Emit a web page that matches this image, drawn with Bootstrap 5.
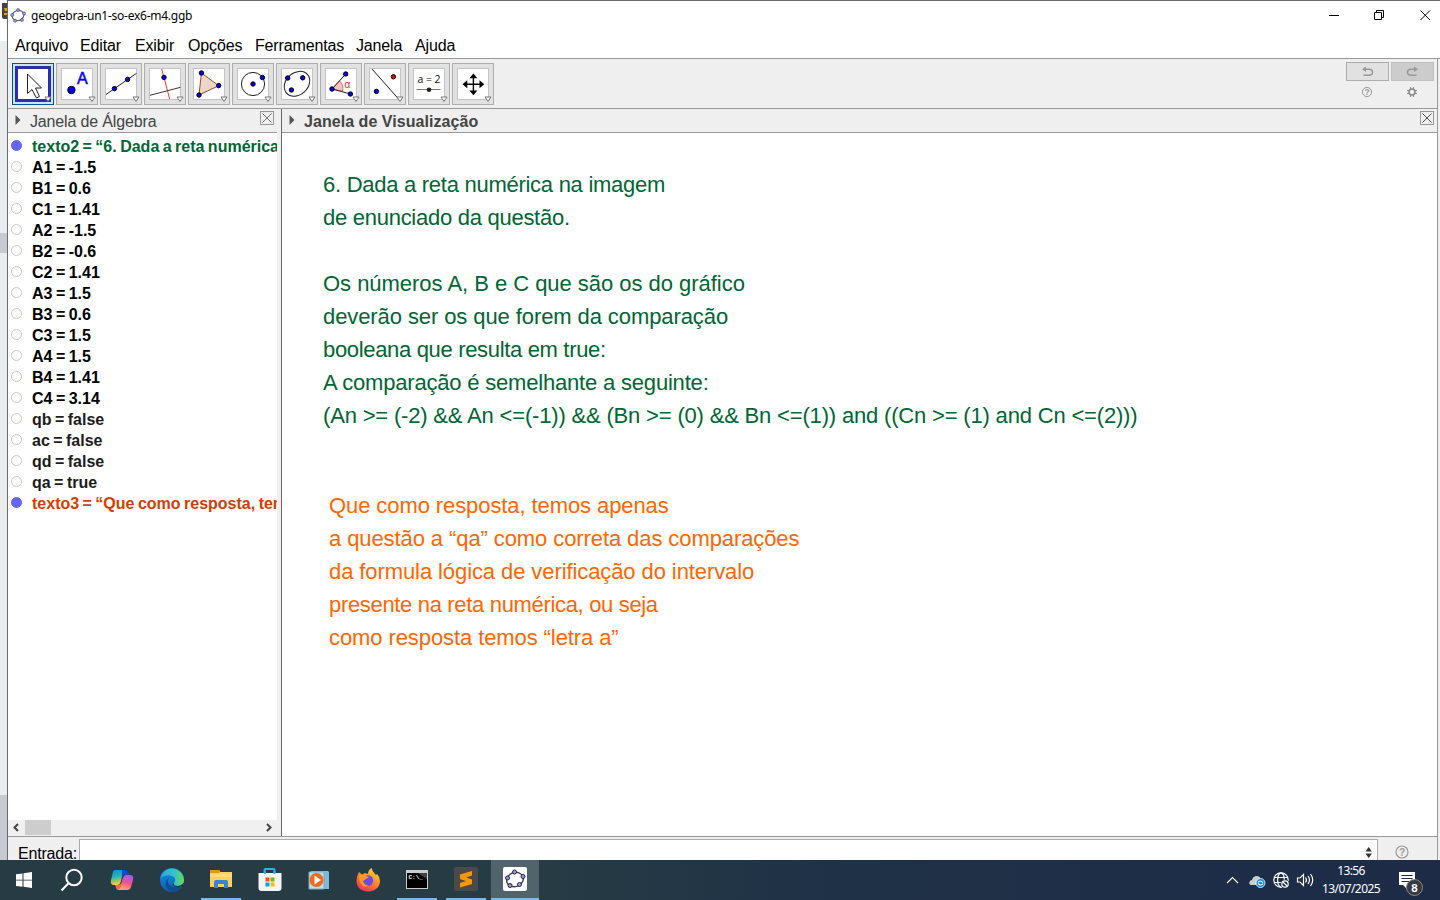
<!DOCTYPE html>
<html lang="pt-BR">
<head>
<meta charset="utf-8">
<title>geogebra-un1-so-ex6-m4.ggb</title>
<link href="https://cdn.jsdelivr.net/npm/bootstrap@5.3.0/dist/css/bootstrap.min.css" rel="stylesheet">
<style>
body{width:1440px;height:900px;font-family:"Liberation Sans",Arial,sans-serif;font-size:16px;line-height:21px;color:#000;background:#fff}
svg{display:block;flex:none}
.desk{width:7px;background:#ebecee}
.desk div:nth-child(1){height:41px;background:#fff}
.desk div:nth-child(2){height:192px}
.desk div:nth-child(3){height:20px;background:#c7cad3}
.desk div:nth-child(4){height:542px}
.desk div:nth-child(5){height:65px;background:#c7cad3}
.win{border-left:1px solid #6b6b6b;border-top:1px solid #6b6b6b;background:#fff;min-width:0}
.titlebar{height:30px;font:12px "Noto Sans","Open Sans",sans-serif;letter-spacing:-.25px;padding-left:2px}
.titlebar span{margin-bottom:2px}
.menus{height:27px;padding-left:7px;letter-spacing:-.15px}
.menus span{white-space:nowrap;padding-top:4px}
.frame{border-top:1px solid #999;background:#f0f0f0;height:801px}
.inner{border-right:1px solid #999;margin-right:2px;width:1430px}
.tools{height:50px;border-bottom:1px solid #999;background:#efefef}
.toolrow{column-gap:2px}
.tool{width:42px;height:42px;background:#e1e1e1;border:1px solid #adadad}
.tool svg{margin:-1px}
.tool.on{background:#cce4f7;border-color:#005499}
.phead{height:24px;background:#efefef;border-bottom:1px solid #999;color:#444}
.phead span{padding-top:2px;letter-spacing:-.15px}
.phead b{padding-top:2px;letter-spacing:.05px}
.alg{width:269px;height:727px}
.split{width:5px;background:#f0f0f0;border-right:1px solid #666}
.list{height:687px;padding-top:3px;background:#fff;font-weight:bold;word-spacing:-1px;overflow:hidden}
.item{height:21px;padding-left:3px;white-space:nowrap}
.item i{width:11px;height:11px;border:1px solid #c9c9c9;border-radius:50%;margin:4px 10px 0 0;flex:none}
.item.sel i{background:#6464ff;border-color:#6464ff}
.item.log{color:#1c1c1c}
.green{color:#006633}.rust{color:#d83c00}
.hscroll{height:16px;background:#f0f0f0}
.thumb{width:26px;height:15px;background:#cdcdcd;margin-left:1px}
.canvas{background:#fff;height:703px;padding:35px 0 0 41px}
.note{font-size:22px;line-height:33px;letter-spacing:-.09px;white-space:nowrap}
.note div{height:33px}
.note .t1{letter-spacing:-.27px}
.note .t2{letter-spacing:-.33px}
.note .t3{letter-spacing:-.19px}
.note .t4{letter-spacing:-.03px}
.note.orange{color:#ff6600;margin:57px 0 0 6px}
.entry{height:24px;border-top:1px solid #999;background:#efefef;letter-spacing:-.2px}
.field{width:1299px;height:22px;margin-top:2px;background:#fff;border:1px solid #aaa;border-bottom:0}
.undo{width:43px;height:19px;border:1px solid #adadad;background:#e1e1e1}
.undo.off{background:#ccc;border-color:#bfbfbf}
.task{height:40px;background:linear-gradient(90deg,#263b44 0,#263b44 38%,#1f3147 58%,#1d2b47 100%)}
.app{width:49px;height:40px}
.app.open{border-bottom:2px solid #76b9ed;width:40px;margin:0 4px 0 5px}
.app.now{background:#51636b;width:48px;margin:0 0 0 1px}
.clock{font:12px/18px "Noto Sans","Open Sans",sans-serif;color:#fff;width:64px;letter-spacing:-.6px}
</style>
<script src="https://cdn.jsdelivr.net/npm/bootstrap@5.3.0/dist/js/bootstrap.bundle.min.js"></script>
</head>
<body class="d-flex flex-column overflow-hidden m-0">
<div class="d-flex" style="height:860px">
  <div class="desk flex-shrink-0"><div><svg width="7" height="20"><path d="M2 3h5v16H4q-2 0-2-2z" fill="#444"/><path d="M4 8h3v3H5zM4 13h3v2H4z" fill="#f90"/></svg></div><div></div><div></div><div></div><div></div></div>
  <div class="win flex-grow-1">
    <div class="titlebar d-flex align-items-center">
      <svg width="17" height="16" viewBox="0 0 17 16"><ellipse cx="8" cy="7.500" rx="6" ry="5" transform="rotate(-20 8 7.500)" fill="#fff" stroke="#555" stroke-width="1.100"/><g fill="#99f" stroke="#445" stroke-width=".6"><circle cx="8" cy="2" r="1.500"/><circle cx="14" cy="5.500" r="1.500"/><circle cx="12" cy="12" r="1.500"/><circle cx="5" cy="12.700" r="1.500"/><circle cx="2.200" cy="7" r="1.500"/></g></svg>
      <span class="ms-1">geogebra-un1-so-ex6-m4.ggb</span>
      <svg class="ms-auto" width="120" height="30" fill="none" stroke="#000"><path d="M9 14.500h10"/><path d="M54.500 11.500h7v7h-7zM56.500 11v-1.500h7v7h-1.500" /><path d="M100.500 9.500l9.500 9.500M110 9.500l-9.500 9.500"/></svg>
    </div>
    <div class="menus d-flex"><span style="width:65px">Arquivo</span><span style="width:55px">Editar</span><span style="width:53px">Exibir</span><span style="width:67px">Opções</span><span style="width:101px">Ferramentas</span><span style="width:59px">Janela</span><span>Ajuda</span></div>
    <div class="frame"><div class="inner">
      <div class="tools d-flex">
        <div class="toolrow d-flex ps-1 pt-1">
          <div class="tool on"><svg width="42" height="42"><rect x="4.500" y="4.500" width="33" height="33" fill="#fff" stroke="#2b2fae" stroke-width="3"/><path d="M15.500 11v19.500l4.500-4 4.500 8.500 3-1.500-4-8.500h6z" fill="#fff" stroke="#222"/><path d="M33 34h6l-3 4.500z" fill="#fff" stroke="#777"/></svg></div>
          <div class="tool"><svg width="42" height="42"><rect x="5.500" y="5.500" width="31" height="31" fill="#fff" stroke="#c4c4c4"/><circle cx="15.400" cy="27" r="3.700" fill="#00f" stroke="#000"/><text x="21" y="21" font-size="16" fill="#00f" stroke="#00f" stroke-width=".5">A</text><path d="M33 34h6l-3 4.500z" fill="#fff" stroke="#777"/></svg></div>
          <div class="tool"><svg width="42" height="42"><rect x="5.500" y="5.500" width="31" height="31" fill="#fff" stroke="#c4c4c4"/><path d="M6 31.500L36.500 10.300" stroke="#222"/><g fill="#00f" stroke="#000"><circle cx="14.400" cy="25.600" r="2.200"/><circle cx="27.600" cy="16.400" r="2.200"/></g><path d="M33 34h6l-3 4.500z" fill="#fff" stroke="#777"/></svg></div>
          <div class="tool"><svg width="42" height="42"><rect x="5.500" y="5.500" width="31" height="31" fill="#fff" stroke="#c4c4c4"/><path d="M17.700 6l8 30" stroke="#f33"/><path d="M6 32.300l30.500-8" stroke="#433"/><circle cx="20" cy="14.400" r="2.200" fill="#00f" stroke="#000"/><path d="M33 34h6l-3 4.500z" fill="#fff" stroke="#777"/></svg></div>
          <div class="tool"><svg width="42" height="42"><rect x="5.500" y="5.500" width="31" height="31" fill="#fff" stroke="#c4c4c4"/><path d="M13.400 10l17.400 12.700L11 32z" fill="#ebd6cc" stroke="#a8481c"/><g fill="#00f" stroke="#000"><circle cx="13.400" cy="10" r="2.200"/><circle cx="30.700" cy="22.600" r="2.200"/><circle cx="11" cy="32" r="2.200"/></g><path d="M33 34h6l-3 4.500z" fill="#fff" stroke="#777"/></svg></div>
          <div class="tool"><svg width="42" height="42"><rect x="5.500" y="5.500" width="31" height="31" fill="#fff" stroke="#c4c4c4"/><circle cx="21" cy="21" r="11.600" fill="none" stroke="#222"/><g fill="#00f" stroke="#000"><circle cx="21" cy="21" r="2.200"/><circle cx="30.400" cy="14.500" r="2.200"/></g><path d="M33 34h6l-3 4.500z" fill="#fff" stroke="#777"/></svg></div>
          <div class="tool"><svg width="42" height="42"><rect x="5.500" y="5.500" width="31" height="31" fill="#fff" stroke="#c4c4c4"/><ellipse cx="21" cy="20.800" rx="14" ry="11" transform="rotate(-42 21 20.800)" fill="none" stroke="#222"/><g fill="#00f" stroke="#000"><circle cx="11.700" cy="15" r="2.200"/><circle cx="26.700" cy="14.800" r="2.200"/><circle cx="15.400" cy="27" r="2.200"/></g><path d="M33 34h6l-3 4.500z" fill="#fff" stroke="#777"/></svg></div>
          <div class="tool"><svg width="42" height="42"><rect x="5.500" y="5.500" width="31" height="31" fill="#fff" stroke="#c4c4c4"/><path d="M12 26l7.500-8.200a11 11 0 0 1 3 10.500z" fill="#fbc4c4" stroke="#f44" stroke-width=".8"/><path d="M25.700 11L12 26l18.500 5" fill="none" stroke="#222"/><text x="24.500" y="24.500" font-size="10" fill="#f22">α</text><g fill="#00f" stroke="#000"><circle cx="25.700" cy="11" r="2.200"/><circle cx="12" cy="26" r="2.200"/><circle cx="30.400" cy="31" r="2.200"/></g><path d="M33 34h6l-3 4.500z" fill="#fff" stroke="#777"/></svg></div>
          <div class="tool"><svg width="42" height="42"><rect x="5.500" y="5.500" width="31" height="31" fill="#fff" stroke="#c4c4c4"/><path d="M8 6l27 30.500" stroke="#222"/><circle cx="12.400" cy="28.400" r="2.200" fill="#00f" stroke="#000"/><circle cx="29.400" cy="13.800" r="2.200" fill="#e00" stroke="#000"/><path d="M33 34h6l-3 4.500z" fill="#fff" stroke="#777"/></svg></div>
          <div class="tool"><svg width="42" height="42"><rect x="5.500" y="5.500" width="31" height="31" fill="#fff" stroke="#c4c4c4"/><text x="9.500" y="19.700" font-size="10.500" textLength="23" style="font-family:'Open Sans',sans-serif" fill="#111">a=2</text><path d="M8.500 26.500h24" stroke="#777"/><circle cx="21" cy="26.700" r="2.300" fill="#222"/><path d="M33 34h6l-3 4.500z" fill="#fff" stroke="#777"/></svg></div>
          <div class="tool"><svg width="42" height="42"><rect x="5.500" y="5.500" width="31" height="31" fill="#fff" stroke="#c4c4c4"/><path d="M21.400 14v14M14 21.300h15" stroke="#000" stroke-width="1.400"/><path d="M21.400 10.400l4 4.800h-8zM21.400 32.200l4-4.800h-8zM10.500 21.300l4.800-4v8zM32.300 21.300l-4.800-4v8z"/><path d="M33 34h6l-3 4.500z" fill="#fff" stroke="#777"/></svg></div>
        </div>
        <div class="ms-auto" style="margin-right:3px;padding-top:3px">
          <div class="d-flex" style="gap:2px">
            <div class="undo"><svg width="41" height="17" fill="none" stroke="#999" stroke-width="1.500"><path d="M16.500 12.300h5.500q3.500 0 3.500-3t-3.500-3h-5"/><path d="M19 3.500l-4 2.800 4 2.800z" fill="#999" stroke="none"/></svg></div>
            <div class="undo off"><svg width="41" height="17" fill="none" stroke="#999" stroke-width="1.500"><path d="M24.500 12.300h-5.500q-3.500 0-3.500-3t3.500-3h5"/><path d="M22 3.500l4 2.800-4 2.800z" fill="#999" stroke="none"/></svg></div>
          </div>
          <div class="d-flex justify-content-between" style="padding:5px 16px 0 15px"><svg width="12" height="12"><circle cx="6" cy="6" r="4.600" fill="none" stroke="#999"/><text x="3.600" y="9" font-size="8.500" font-weight="bold" fill="#999">?</text></svg><svg width="12" height="12" fill="none" stroke="#888"><circle cx="6" cy="6" r="3" stroke-width="1.500"/><path d="M4.500 1v3M7.500 1v3M4.500 8v3M7.500 8v3M1 4.500h3M1 7.500h3M8 4.500h3M8 7.500h3" stroke-width="1"/></svg></div>
        </div>
      </div>
      <div class="d-flex">
        <div class="alg">
          <div class="phead d-flex"><svg width="22" height="23"><path d="M7.500 6v10l5-5z" fill="#555"/></svg><span>Janela de Álgebra</span><svg class="ms-auto" style="margin-right:3px" width="14" height="18" fill="none" stroke="#777"><rect x=".5" y="2.500" width="13" height="13" stroke="#999"/><path d="M2.500 4.500l9 9M11.500 4.500l-9 9"/></svg></div>
          <div class="list">
            <div class="item sel d-flex green"><i></i>texto2 = “6. Dada a reta numérica</div>
            <div class="item d-flex"><i></i>A1 = -1.5</div><div class="item d-flex"><i></i>B1 = 0.6</div><div class="item d-flex"><i></i>C1 = 1.41</div>
            <div class="item d-flex"><i></i>A2 = -1.5</div><div class="item d-flex"><i></i>B2 = -0.6</div><div class="item d-flex"><i></i>C2 = 1.41</div>
            <div class="item d-flex"><i></i>A3 = 1.5</div><div class="item d-flex"><i></i>B3 = 0.6</div><div class="item d-flex"><i></i>C3 = 1.5</div>
            <div class="item d-flex"><i></i>A4 = 1.5</div><div class="item d-flex"><i></i>B4 = 1.41</div><div class="item d-flex"><i></i>C4 = 3.14</div>
            <div class="item log d-flex"><i></i>qb = false</div><div class="item log d-flex"><i></i>ac = false</div><div class="item log d-flex"><i></i>qd = false</div><div class="item log d-flex"><i></i>qa = true</div>
            <div class="item sel d-flex rust"><i></i>texto3 = “Que como resposta, tem</div>
          </div>
          <div class="hscroll d-flex"><svg width="16" height="15" fill="none" stroke="#444" stroke-width="2"><path d="M10 4L6.500 7.500 10 11"/></svg><div class="thumb"></div><svg class="ms-auto" width="16" height="15" fill="none" stroke="#444" stroke-width="2"><path d="M6 4l3.500 3.500L6 11"/></svg></div>
        </div>
        <div class="split"></div>
        <div class="flex-grow-1">
          <div class="phead d-flex"><svg width="22" height="23"><path d="M7.500 6v10l5-5z" fill="#555"/></svg><b>Janela de Visualização</b><svg class="ms-auto" style="margin-right:3px" width="14" height="18" fill="none" stroke="#555"><rect x=".5" y="2.500" width="13" height="13" stroke="#999"/><path d="M2.500 4.500l9 9M11.500 4.500l-9 9"/></svg></div>
          <div class="canvas">
            <div class="note green">
              <div class="t1">6. Dada a reta numérica na imagem</div>
              <div class="t1">de enunciado da questão.</div>
              <div></div>
              <div class="t4">Os números A, B e C que são os do gráfico</div>
              <div>deverão ser os que forem da comparação</div>
              <div class="t2">booleana que resulta em true:</div>
              <div class="t3">A comparação é semelhante a seguinte:</div>
              <div style="letter-spacing:-.176px">(An &gt;= (-2) &amp;&amp; An &lt;=(-1)) &amp;&amp; (Bn &gt;= (0) &amp;&amp; Bn &lt;=(1)) and ((Cn &gt;= (1) and Cn &lt;=(2)))</div>
            </div>
            <div class="note orange">
              <div>Que como resposta, temos apenas</div>
              <div>a questão a “qa” como correta das comparações</div>
              <div>da formula lógica de verificação do intervalo</div>
              <div class="t2">presente na reta numérica, ou seja</div>
              <div>como resposta temos “letra a”</div>
            </div>
          </div>
        </div>
      </div>
      <div class="entry d-flex"><span style="width:61px;margin:6px 0 0 10px">Entrada:</span>
        <div class="field"><svg class="ms-auto" width="16" height="21"><path d="M4.500 11.500l3.200-4.500 3.200 4.500zM4.500 13.500l3.200 4.500 3.200-4.500z" fill="#333"/></svg></div>
        <svg class="ms-auto" style="margin-right:28px" width="14" height="23"><circle cx="7" cy="15" r="6" fill="none" stroke="#999" stroke-width="1.200"/><text x="4" y="18.700" font-size="10" font-weight="bold" fill="#999">?</text></svg>
      </div>
    </div></div>
  </div>
</div>
<div class="task d-flex">
  <div class="app d-flex justify-content-center align-items-center" style="width:48px"><svg width="16" height="16" fill="#fff"><path d="M0 2.300L6.500 1.400v6.300H0zM7.500 1.200L16 0v7.700H7.500zM0 8.600h6.500v6.200L0 13.900zM7.500 8.600H16V16l-8.500-1.200z"/></svg></div>
  <div class="app d-flex justify-content-center align-items-center" style="width:48px"><svg width="24" height="24" fill="none" stroke="#fff" stroke-width="2"><circle cx="14" cy="9.500" r="7.700"/><path d="M8.700 15L1.500 22.500"/></svg></div>
  <div class="app d-flex justify-content-center align-items-center" style="width:52px"><svg width="24" height="24" viewBox="0 0 24 24"><defs><linearGradient id="ca" x2=".2" y2="1"><stop stop-color="#138ddf"/><stop offset=".5" stop-color="#29b5b5"/><stop offset="1" stop-color="#f5d530"/></linearGradient><linearGradient id="cb" x1=".6" x2=".3" y2="1"><stop stop-color="#a55be8"/><stop offset=".5" stop-color="#f4528a"/><stop offset="1" stop-color="#ffad70"/></linearGradient></defs><path d="M5 2h11q-3 1-4 6l-1 5q-1 4-4 4H4q-4 0-3-5L2.500 6Q3 2 5 2z" fill="url(#ca)"/><path d="M12 2h3q3 0 4 5h-4q-2 0-3 2z" fill="#1748c8"/><path d="M19 7h1q4 0 3 5l-2 7q-1 3-3 3H7q3-1 4-5l1.500-6Q14 7 16 7z" fill="url(#cb)"/><path d="M5 17h3q3-1 4-2-1 7-5 7Q6 20 5 17z" fill="#ff6a3c"/></svg></div>
  <div class="app d-flex justify-content-center align-items-center" style="width:48px"><svg width="24" height="24" viewBox="0 0 24 24"><defs><linearGradient id="ea"><stop stop-color="#2aa6e8"/><stop offset=".6" stop-color="#35c3c8"/><stop offset="1" stop-color="#68db4c"/></linearGradient><linearGradient id="eb" x2="0" y2="1"><stop stop-color="#168ddd"/><stop offset="1" stop-color="#0b62b8"/></linearGradient></defs><circle cx="12" cy="12" r="12" fill="url(#eb)"/><path d="M.3 10A12 12 0 0 1 24 12c0 4-3 6-6 6-4 0-5-1.500-4-3q3-4-1-6.500Q6 5.500.3 10z" fill="url(#ea)"/><path d="M9 10c-4 5 2 12 13 8A12 12 0 0 1 12 24C4 22 4 12 9 10z" fill="#124d91"/><path d="M14 15q-1 3 4 3 3 0 5.500-3L24 20l-2-1.500q-7 2-10-2z" fill="#263b44"/></svg></div>
  <div class="app open d-flex justify-content-center align-items-center"><svg width="22" height="22" viewBox="0 0 22 22"><path d="M0 2h9l1.500 2H22v15H0z" fill="#ffd05c"/><path d="M0 2h9l1 2-1 1H0z" fill="#dc9a14"/><path d="M4 20v-6q0-2 2-2h10q2 0 2 2v6h-4v-4H8v4z" fill="#3487d4"/><path d="M0 6h22v3H0z" fill="#ffdb79"/></svg></div>
  <div class="app d-flex justify-content-center align-items-center"><svg width="24" height="24" viewBox="0 0 24 24"><path d="M6.500 7V2q0-1 1-1h8q1 0 1 1v5" fill="none" stroke="#25b5ee" stroke-width="2"/><path d="M.5 5h23v15q0 3-3 3h-17q-3 0-3-3z" fill="#f4f4f4"/><path d="M6 6V3h2v3M15.500 6V3h2v3" fill="#25b5ee"/><path d="M7.500 9.500h4v4h-4z" fill="#f25022"/><path d="M12.500 9.500h4v4h-4z" fill="#7fba00"/><path d="M7.500 14.500h4v4h-4z" fill="#00a4ef"/><path d="M12.500 14.500h4v4h-4z" fill="#ffb900"/></svg></div>
  <div class="app d-flex justify-content-center align-items-center"><svg width="22" height="22" viewBox="0 0 22 22"><path d="M3 2h17l1 1v17H5L2 18z" fill="#7dbbd8"/><path d="M1 3h15v17H1z" fill="#b9dfed" stroke="#78adc4"/><circle cx="8.500" cy="11" r="7" fill="#f26b1d"/><path d="M6.500 6.500l6.500 4.500-6.500 4.500z" fill="#fff"/></svg></div>
  <div class="app d-flex justify-content-center align-items-center"><svg width="24" height="24" viewBox="0 0 24 24"><defs><linearGradient id="fa" x1=".8" x2=".2" y2="1"><stop stop-color="#ffe33d"/><stop offset=".45" stop-color="#ff8a26"/><stop offset="1" stop-color="#f52b5c"/></linearGradient></defs><path d="M2 6l1-2 3 2.500L9 5l3 1q0-4 3.500-6Q16 3 19 6l1 1 1-1q3 3 3 7c0 6-5 10.500-12 10.500S.5 19 .5 13Q.5 9 2 6z" fill="url(#fa)"/><circle cx="12" cy="12.500" r="5.200" fill="#6c4be0"/><path d="M3 7q4-1 7 1l3 1-3 2-3 2q1 4 5 4.500-2 2-5 .5-4-3-4-11z" fill="#ff9b25"/></svg></div>
  <div class="app open d-flex justify-content-center align-items-center"><svg width="22" height="20" viewBox="0 0 22 20" style="margin-right:1px"><path d="M0 1h22v19H0z" fill="#ccc"/><path d="M1 4h20v15H1z" fill="#000"/><path d="M12 4h9v6z" fill="#444"/><text x="2.500" y="9.500" font-size="6" font-weight="bold" fill="#fff" style="font-family:'Liberation Mono',monospace">C:\_</text></svg></div>
  <div class="app open d-flex justify-content-center align-items-center"><svg width="24" height="24" viewBox="0 0 24 24"><rect width="24" height="24" rx="2" fill="#4a4a4a"/><path d="M6 7.500L18 4v4.500l-6 2 6 2V17L6 20.500V16l6-2-6-2z" fill="#ff9800"/></svg></div>
  <div class="app open now d-flex justify-content-center align-items-center"><svg width="24" height="24" viewBox="0 0 24 24"><rect width="24" height="24" rx="2" fill="#fff"/><ellipse cx="12" cy="12.500" rx="8.500" ry="7" transform="rotate(-20 12 12.500)" fill="none" stroke="#444" stroke-width="1.400"/><g fill="#99f" stroke="#222"><circle cx="11.500" cy="5" r="2"/><circle cx="20" cy="9.500" r="2"/><circle cx="16.500" cy="17.500" r="2"/><circle cx="7" cy="18.500" r="2"/><circle cx="4.500" cy="11" r="2"/></g></svg></div>
  <div class="d-flex ms-auto align-items-center">
    <svg width="94" height="40" viewBox="0 0 94 40" fill="none" stroke="#fff" stroke-width="1.200"><path d="M2 23l5.500-5.500L13 23"/><path d="M26 25q-3-1-1-4 1-1 2-1 1-4 5-4 3 0 4 4 3 0 3 3t-3 2z" fill="#c8cdd2" stroke="none"/><circle cx="35.500" cy="23" r="4.500" fill="#1784d8" stroke="#fff" stroke-width=".8"/><path d="M33 22.500q2-3 5 0M38 23.500q-2 3-5 0"/><circle cx="56" cy="20" r="7.200"/><ellipse cx="56" cy="20" rx="3.400" ry="7.200"/><path d="M49 17.500h14M49 22.500h14"/><circle cx="60" cy="24" r="4.500" fill="#1e2d46" stroke="none"/><circle cx="60" cy="24" r="3.200"/><path d="M58 22l4 4"/><path d="M72.500 18h2.500l3.500-3.500v11L75 22h-2.500zM80.500 17.500q2 2.500 0 5M83 16q3 4 0 8M85.500 14q4.500 6 0 12"/></svg>
    <div class="clock text-center"><div>13:56</div><div>13/07/2025</div></div>
    <svg width="57" height="40"><path d="M16 12h16v13h-8v4l-4-4h-4z" fill="#fff"/><path d="M18.500 15.500h11M18.500 18.500h11M18.500 21.500h8" stroke="#1d2b47"/><circle cx="31.500" cy="27.500" r="8" fill="#36393f" stroke="#888"/><text x="28.300" y="31.700" font-size="11.500" font-weight="bold" fill="#fff">8</text></svg>
  </div>
</div>
</body>
</html>
